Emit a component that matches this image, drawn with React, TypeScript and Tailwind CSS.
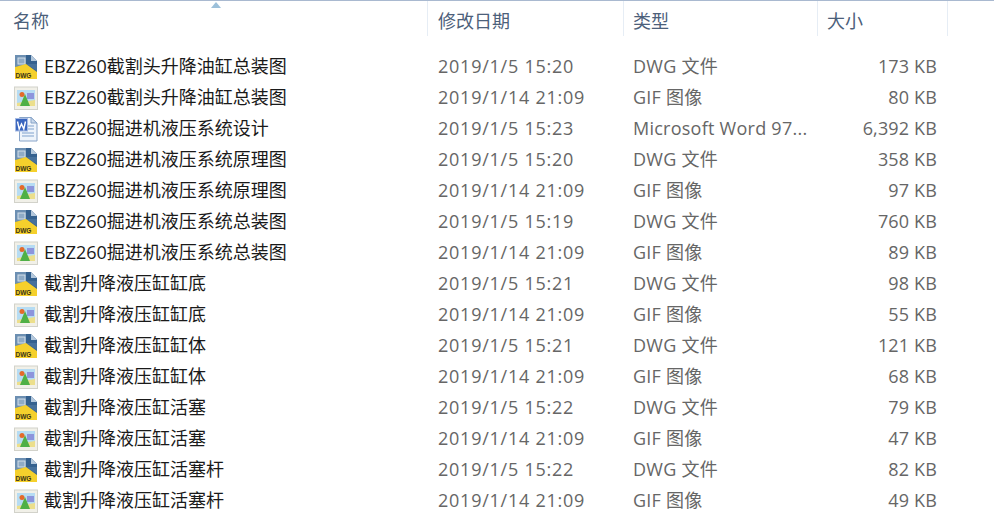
import React from 'react';

type FileRow = { name: string; date: string; type: string; size: string; icon: 'dwg' | 'gif' | 'doc' };

const files: FileRow[] = [
  { name: 'EBZ260截割头升降油缸总装图', date: '2019/1/5 15:20', type: 'DWG 文件', size: '173 KB', icon: 'dwg' },
  { name: 'EBZ260截割头升降油缸总装图', date: '2019/1/14 21:09', type: 'GIF 图像', size: '80 KB', icon: 'gif' },
  { name: 'EBZ260掘进机液压系统设计', date: '2019/1/5 15:23', type: 'Microsoft Word 97...', size: '6,392 KB', icon: 'doc' },
  { name: 'EBZ260掘进机液压系统原理图', date: '2019/1/5 15:20', type: 'DWG 文件', size: '358 KB', icon: 'dwg' },
  { name: 'EBZ260掘进机液压系统原理图', date: '2019/1/14 21:09', type: 'GIF 图像', size: '97 KB', icon: 'gif' },
  { name: 'EBZ260掘进机液压系统总装图', date: '2019/1/5 15:19', type: 'DWG 文件', size: '760 KB', icon: 'dwg' },
  { name: 'EBZ260掘进机液压系统总装图', date: '2019/1/14 21:09', type: 'GIF 图像', size: '89 KB', icon: 'gif' },
  { name: '截割升降液压缸缸底', date: '2019/1/5 15:21', type: 'DWG 文件', size: '98 KB', icon: 'dwg' },
  { name: '截割升降液压缸缸底', date: '2019/1/14 21:09', type: 'GIF 图像', size: '55 KB', icon: 'gif' },
  { name: '截割升降液压缸缸体', date: '2019/1/5 15:21', type: 'DWG 文件', size: '121 KB', icon: 'dwg' },
  { name: '截割升降液压缸缸体', date: '2019/1/14 21:09', type: 'GIF 图像', size: '68 KB', icon: 'gif' },
  { name: '截割升降液压缸活塞', date: '2019/1/5 15:22', type: 'DWG 文件', size: '79 KB', icon: 'dwg' },
  { name: '截割升降液压缸活塞', date: '2019/1/14 21:09', type: 'GIF 图像', size: '47 KB', icon: 'gif' },
  { name: '截割升降液压缸活塞杆', date: '2019/1/5 15:22', type: 'DWG 文件', size: '82 KB', icon: 'dwg' },
  { name: '截割升降液压缸活塞杆', date: '2019/1/14 21:09', type: 'GIF 图像', size: '49 KB', icon: 'gif' },
];

const DwgIcon = () => (
  <svg width="24" height="26" viewBox="0 0 24 26" className="shrink-0">
    <path d="M1 1H17L23 7V25H1Z" fill="#35618f" />
    <path d="M17 1L23 7H17Z" fill="#b4c8dc" />
    <path d="M1 1H12V11L1 13Z" fill="#6c8fb2" />
    <rect x="4" y="4" width="7" height="6" fill="#8fabc6" stroke="#d3dfe9" strokeWidth="1" />
    <path d="M12 10L23 17V10Z" fill="#47719c" />
    <path d="M1 13L12 10L23 18V25H1Z" fill="#f5d02c" />
    <text x="1.500" y="23.500" fontSize="6.500" fontWeight="700" fill="#3a3418" fontFamily="'Liberation Sans', sans-serif">DWG</text>
  </svg>
);

const GifIcon = () => (
  <svg width="24" height="24" viewBox="0 0 24 24" className="shrink-0">
    <rect x="0.500" y="1" width="23" height="22.500" fill="#f1f0e8" stroke="#d2d2ca" />
    <rect x="3" y="4" width="18" height="16" fill="#b6dcf3" />
    <path d="M3 17L21 14V20H3Z" fill="#ecdf8c" />
    <rect x="13" y="7" width="7" height="6" fill="#8d95dc" />
    <path d="M6 20L11 8L16 20Z" fill="#4fb046" />
    <circle cx="8" cy="8.500" r="2.500" fill="#e46a2a" />
  </svg>
);

const DocIcon = () => (
  <svg width="24" height="26" viewBox="0 0 24 26" className="shrink-0">
    <path d="M5.500 1.500H17L23 7V25H5.500Z" fill="#eef4fb" stroke="#88a4c8" />
    <path d="M17 1.500V7H23Z" fill="#c9d9ec" stroke="#88a4c8" />
    <path d="M14 10H20M14 13H20M8 17H20M8 20H20" stroke="#7fa1cd" strokeWidth="1" />
    <rect x="1.500" y="2.500" width="12" height="12.500" fill="#3a66bf" stroke="#a6bbe3" />
    <path d="M3.500 5.500L5.200 13L7.500 8L9.800 13L11.500 5.500" fill="none" stroke="#fff" strokeWidth="1.400" />
  </svg>
);

const icons = { dwg: DwgIcon, gif: GifIcon, doc: DocIcon };

const App: React.FC = () => {
  return (
    <div className="w-[994px] h-[516px] overflow-hidden bg-white border-t-[1.500px] border-[#a9b9d0] font-['Open_Sans','Noto_Sans_CJK_SC',sans-serif] text-[18px]">
      <header className="relative flex h-[35px] pl-[13px] text-[#4c607a] leading-[40px]">
        <div className="w-[415px] border-r border-[#e6edf5]">名称</div>
        <div className="w-[196px] pl-[10px] border-r border-[#e6edf5]">修改日期</div>
        <div className="w-[194px] pl-[9px] border-r border-[#e6edf5]">类型</div>
        <div className="w-[130px] pl-[9px] border-r border-[#e6edf5]">大小</div>
        <svg width="10" height="6" viewBox="0 0 10 6" className="absolute left-[211px] top-[1px]">
          <path d="M5 0L10 6H0Z" fill="#9cc0da" />
        </svg>
      </header>
      <main className="pt-[15px]">
        {files.map((file, i) => {
          const Icon = icons[file.icon];
          return (
            <div key={i} className="flex items-center h-[31px] text-[#666]">
              <div className="w-[428px] flex items-center pl-[14px] gap-[6px] text-[#1a1a1a] whitespace-nowrap">
                <Icon />
                <span>{file.name}</span>
              </div>
              <div className="w-[195px] pl-[10px] whitespace-nowrap tracking-[0.750px]">{file.date}</div>
              <div className="w-[195px] pl-[10px] whitespace-nowrap tracking-[0.250px]">{file.type}</div>
              <div className="w-[119px] text-right whitespace-nowrap tracking-[0.150px]">{file.size}</div>
            </div>
          );
        })}
      </main>
    </div>
  );
};

export default App;
